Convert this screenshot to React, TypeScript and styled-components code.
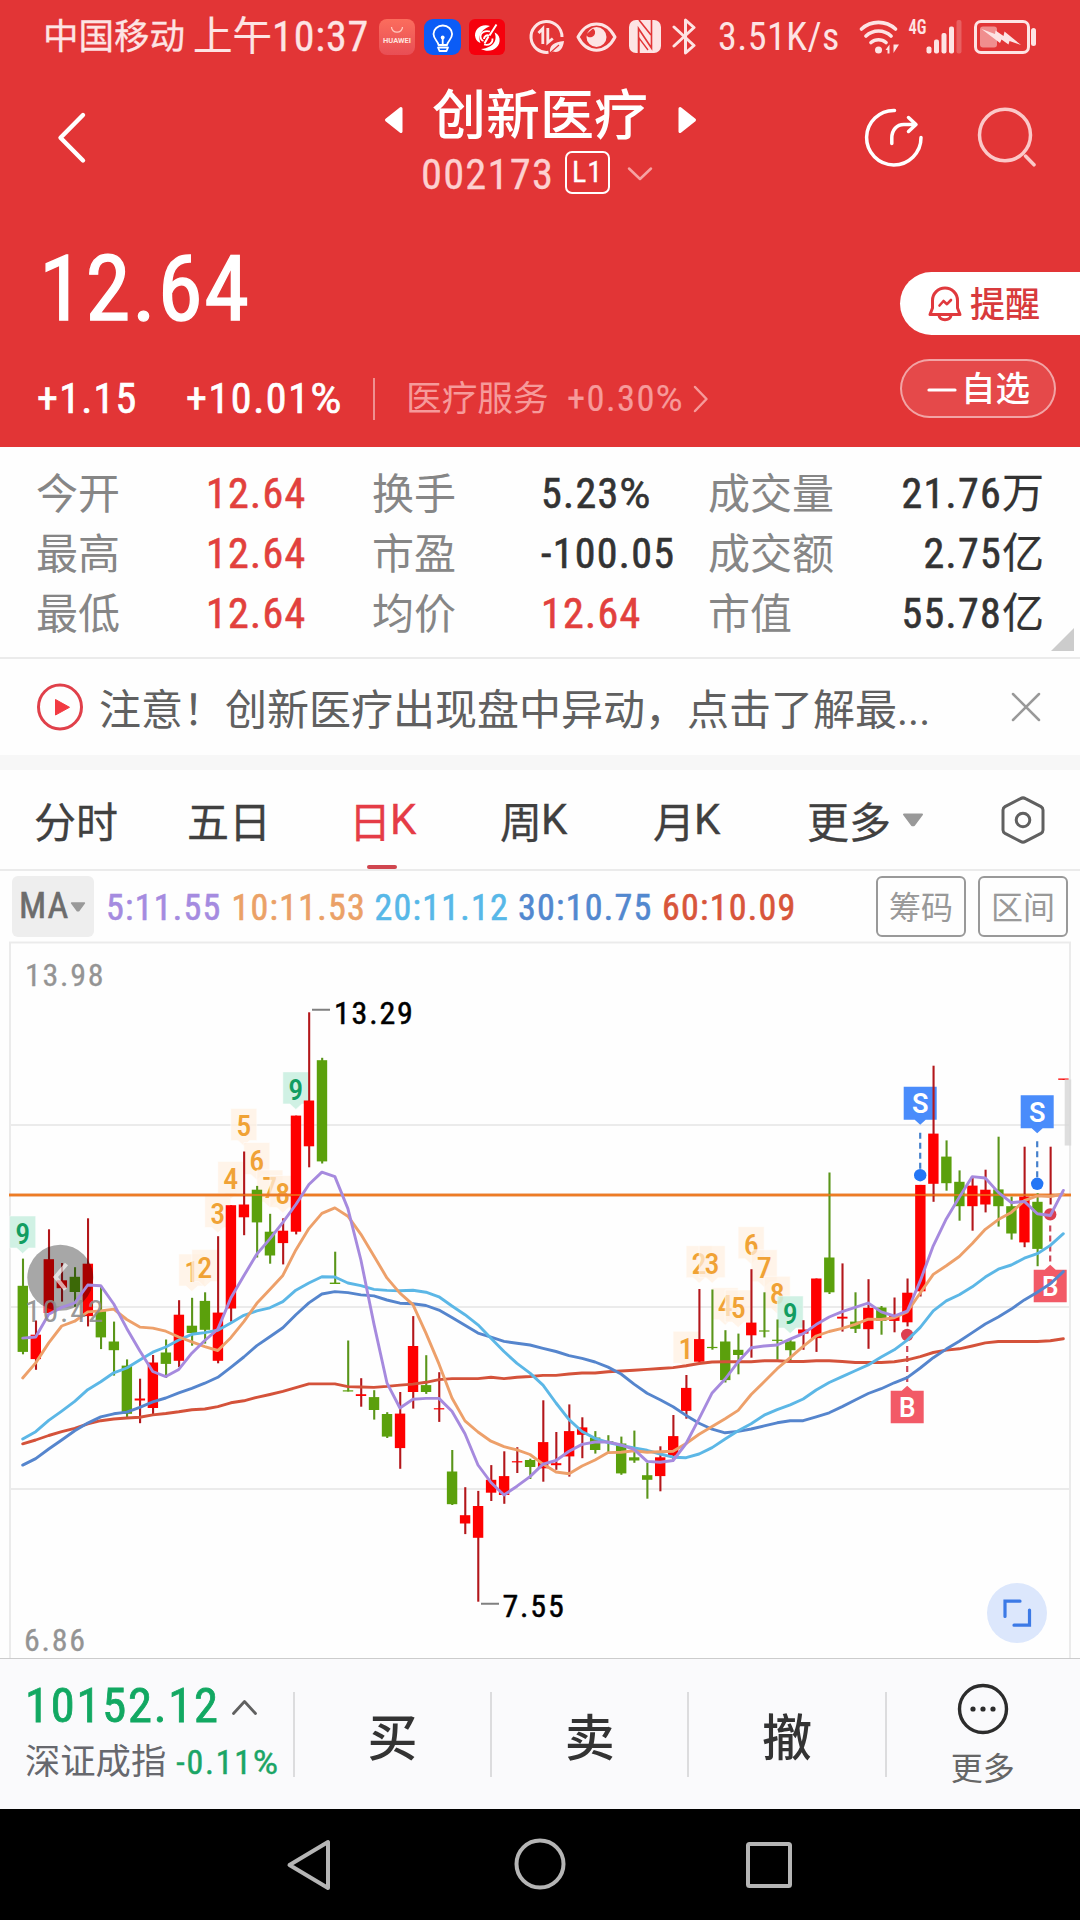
import React from 'react';
import styled, { createGlobalStyle } from 'styled-components';

const RED = '#e23536';
const FONT = "'Roboto Condensed', 'Noto Sans CJK SC', sans-serif";

const GlobalStyle = createGlobalStyle`
  * { box-sizing: border-box; }
  body { margin: 0; background: #fff; font-family: ${FONT}; }
  svg { display: block; flex: none; }
`;

const Screen = styled.main`
  display: flex;
  flex-direction: column;
  width: 1080px;
  height: 1920px;
  overflow: hidden;
  background: #fefefe;
`;

type TextProps = { $size: number; $color?: string; $weight?: number; $track?: number; $line?: number; $stroke?: number };

/** A run of text. Size, weight, tracking and colour vary from use to use. */
const Text = styled.span<TextProps>`
  font-size: ${p => p.$size}px;
  font-weight: ${p => p.$weight ?? 400};
  letter-spacing: ${p => p.$track ?? 0}px;
  line-height: ${p => p.$line ?? p.$size * 1.2}px;
  color: ${p => p.$color ?? 'inherit'};
  -webkit-text-stroke: ${p => p.$stroke ?? 0}px currentColor;
  white-space: nowrap;
`;

const Percent = styled.span`
  font-family: Roboto, sans-serif;
  letter-spacing: 0;
`;

const Unit = styled.span`
  letter-spacing: 0;
  -webkit-text-stroke-width: 0.2px;
`;

/** Digits with a full-width percent sign or a lighter Chinese unit after them. */
const Figure = ({ value }: { value: string }) => {
  const last = value.slice(-1);
  if (last === '%') return <>{value.slice(0, -1)}<Percent>%</Percent></>;
  if (last === '万' || last === '亿') return <>{value.slice(0, -1)}<Unit>{last}</Unit></>;
  return <>{value}</>;
};

/* ---------- header ---------- */

const Header = styled.header`
  display: flex;
  flex-direction: column;
  height: 447px;
  background: ${RED};
  color: #fff;
`;

const StatusBar = styled.div`
  display: flex;
  align-items: center;
  height: 73px;
  padding-left: 43px;
  color: #fde4e4;
`;

const Slot = styled.div<{ $w: number; $gap?: number }>`
  display: flex;
  width: ${p => p.$w}px;
  margin-left: ${p => p.$gap ?? 0}px;
`;

const TitleBar = styled.div`
  display: grid;
  grid-template-columns: 360px 1fr 360px;
  height: 133px;
`;

const BackArea = styled.div`
  padding: 38px 0 0 54px;
`;

const TitleStack = styled.div`
  display: flex;
  flex-direction: column;
  align-items: center;
`;

const NameLine = styled.div`
  display: flex;
  align-items: center;
  justify-content: space-between;
  width: 313px;
  height: 68px;
  margin: 10px 0 0;
`;

const CodeLine = styled.div`
  display: flex;
  align-items: center;
  height: 46px;
  width: 238px;
`;

const LevelBadge = styled.span`
  display: flex;
  align-items: center;
  justify-content: center;
  width: 45px;
  height: 43px;
  margin: -4px 17px 0 11px;
  border: 2px solid #fff;
  border-radius: 7px;
`;

const HeaderActions = styled.div`
  display: flex;
  gap: 50px;
  padding: 34px 0 0 142px;
`;

const QuoteArea = styled.div`
  display: flex;
  justify-content: space-between;
  flex: 1;
`;

const QuoteColumn = styled.div`
  display: flex;
  flex-direction: column;
  padding: 33px 0 0 37px;
`;

const Price = styled.span`
  padding-left: 2px;
  font-size: 91px;
  letter-spacing: 1.6px;
  line-height: 100px;
  -webkit-text-stroke: 1.3px currentColor;
`;

const ChangeLine = styled.div`
  display: flex;
  align-items: center;
  height: 60px;
  margin-top: 30px;
`;

const Divider = styled.i<{ $h: number; $color: string }>`
  width: 2px;
  height: ${p => p.$h}px;
  background: ${p => p.$color};
`;

const QuoteButtons = styled.div`
  display: flex;
  flex-direction: column;
  gap: 24px;
  width: 180px;
  padding-top: 66px;
`;

const AlertButton = styled.button`
  display: flex;
  align-items: center;
  gap: 8px;
  height: 63px;
  padding: 0 0 0 28px;
  border: 0;
  border-radius: 32px 0 0 32px;
  background: #fff;
  font-family: inherit;

  span { padding-top: 4px; }
`;

const WatchButton = styled.button`
  display: flex;
  align-items: center;
  gap: 4px;
  width: 156px;
  height: 59px;
  padding: 2px 0 0 25px;
  border: 2px solid rgba(255, 255, 255, 0.5);
  border-radius: 30px;
  background: rgba(255, 255, 255, 0.1);
  color: #fff;
  font-family: inherit;
`;

/* ---------- statistics ---------- */

const Stats = styled.section`
  position: relative;
  display: grid;
  grid-template-columns: 170px 166px 169px 167px 123px 213px;
  grid-auto-rows: 60px;
  height: 212px;
  padding: 17px 0 0 36px;
  border-bottom: 2px solid #ebebeb;
`;

const StatLabel = styled.span`
  font-size: 42px;
  line-height: 62px;
  color: #868686;
  white-space: nowrap;
`;

const StatValue = styled.span<{ $red: boolean; $end: boolean }>`
  font-size: 42px;
  line-height: 60px;
  letter-spacing: 1.3px;
  color: ${p => (p.$red ? '#e2403d' : '#333')};
  text-align: ${p => (p.$end ? 'right' : 'left')};
  -webkit-text-stroke: 0.6px currentColor;
  white-space: nowrap;
`;

const Corner = styled.i`
  position: absolute;
  right: 6px;
  bottom: 6px;
  border-left: 23px solid transparent;
  border-bottom: 23px solid #ccc;
`;

/* ---------- notice ---------- */

const Notice = styled.section`
  display: flex;
  align-items: center;
  height: 111px;
  padding: 0 39px 0 37px;
  border-bottom: 15px solid #f7f7f7;
`;

const NoticeText = styled.p`
  flex: 1;
  margin: 7px 0 0 16px;
  font-size: 42px;
  line-height: 60px;
  color: #606060;
  white-space: nowrap;
`;

/* ---------- tabs ---------- */

const Tabs = styled.nav`
  display: flex;
  height: 101px;
  padding-left: 34px;
  border-bottom: 2px solid #ebebeb;
`;

const Tab = styled.div<{ $w: number; $active?: boolean }>`
  position: relative;
  display: flex;
  align-items: center;
  gap: 11px;
  width: ${p => p.$w}px;
  font-size: 42px;
  color: ${p => (p.$active ? '#e53c46' : '#404040')};
  -webkit-text-stroke: 0.3px currentColor;

  &::after {
    content: ${p => (p.$active ? "''" : 'none')};
    position: absolute;
    left: 18px;
    bottom: 0;
    width: 30px;
    height: 4px;
    border-radius: 2px;
    background: #d0464f;
  }
`;

const Latin = styled.span`
  margin-left: -12px;
  font-family: Roboto, sans-serif;
`;

/* ---------- moving averages ---------- */

const Averages = styled.div`
  display: flex;
  align-items: center;
  height: 70px;
  padding: 0 12px;
`;

const IndicatorButton = styled.button`
  display: flex;
  align-items: center;
  gap: 1px;
  width: 82px;
  height: 61px;
  margin-right: 12px;
  padding: 2px 0 0 7px;
  border: 0;
  border-radius: 6px;
  background: #eee;
  font-family: inherit;
`;

const AverageValue = styled.span<{ $w: number; $color: string }>`
  width: ${p => p.$w}px;
  padding-top: 4px;
  font-size: 36px;
  letter-spacing: 1.25px;
  line-height: 46px;
  color: ${p => p.$color};
  -webkit-text-stroke: 0.6px currentColor;
  white-space: nowrap;
`;

const OutlineButton = styled.button`
  width: 90px;
  height: 61px;
  margin-left: 12px;
  padding: 4px 0 0;
  border: 2px solid #999;
  border-radius: 6px;
  background: none;
  color: #999;
  font: 400 32px/50px ${FONT};
  white-space: nowrap;
`;

const ChartArea = styled.section`
  height: 717px;
  background: #fefefe;
`;

/* ---------- bottom ---------- */

const TradeBar = styled.footer`
  display: flex;
  align-items: center;
  height: 151px;
  border-top: 1px solid #ccc;
  background: #fafafc;
`;

const IndexBox = styled.div`
  display: flex;
  flex-direction: column;
  width: 293px;
  padding: 0 0 1px 25px;
`;

const IndexLine = styled.div<{ $gap: number; $h: number }>`
  display: flex;
  align-items: center;
  gap: ${p => p.$gap}px;
  height: ${p => p.$h}px;
`;

const TradeButton = styled.div`
  display: flex;
  align-items: center;
  justify-content: center;
  width: 195.2px;
  height: 110px;
  font-size: 50px;
  font-weight: 500;
  color: #333;
`;

const MoreButton = styled.div`
  display: flex;
  flex: 1;
  flex-direction: column;
  align-items: center;
  gap: 15px;
  padding: 4px 1px 0 0;
`;

const SystemNav = styled.div`
  display: flex;
  align-items: center;
  justify-content: space-between;
  height: 111px;
  padding: 0 285px;
  background: #000;
`;

/* ---------- icons ---------- */

const StoreIcon = () => (
  <svg width="36" height="36" viewBox="0 0 36 36">
    <defs>
      <linearGradient id="store" x1="0" y1="0" x2="0" y2="1">
        <stop offset="0" stopColor="#fb6d5d" />
        <stop offset="1" stopColor="#e84e55" />
      </linearGradient>
    </defs>
    <rect width="36" height="36" rx="8" fill="url(#store)" />
    <path d="M12.5 8a5.5 5.2 0 0 0 11 0" fill="none" stroke="#ffc9bf" strokeWidth="1.3" />
    <text x="18" y="24" fontSize="6.6" fontFamily="Roboto" fontWeight="700" textAnchor="middle" textLength="28" lengthAdjust="spacingAndGlyphs" fill="#ffe3df">HUAWEI</text>
  </svg>
);

const BulbIcon = () => (
  <svg width="37" height="36" viewBox="0 0 37 36" fill="none" stroke="#fff" strokeWidth="1.8" strokeLinejoin="round">
    <rect width="37" height="36" rx="9" fill="#0b5cf6" stroke="none" />
    <path d="M14.500 26c0-3.500-5-5.600-5-11a9.300 8.500 0 0 1 18.600 0c0 5.400-5 7.500-5 11zM14 28.500h10l-1.500 3.500h-7zM18.700 19v6" />
    <circle cx="18.700" cy="18.500" r="1.900" fill="#fff" stroke="none" />
  </svg>
);

const SwirlIcon = () => (
  <svg width="36" height="36" viewBox="0 0 36 36" fill="none" stroke="#fff">
    <rect width="36" height="36" rx="6" fill="#f6000d" stroke="none" />
    <path d="M21 7C12 4 4 11 6.500 19c.7 2.500 3 4.500 5 5-2-5-2-12 9.500-17z" fill="#fff" stroke="none" />
    <path d="M12 30c9 5 20-1 18.500-10.500-.5-3.500-3-5.500-5-6 3 7 0 15-13.500 16.500z" fill="#fff" stroke="none" />
    <path d="M21 12.500c-5-1.500-9.500 1-9.500 5 0 3 1.500 4 3 4.500M15 25.500c5 1.500 9-1.500 8.500-6" strokeWidth="1.700" />
    <path d="M27.500 5.500 20.500 16.500M19.500 17.500l-4 7M15 20c0-3 3-4.500 5-3" strokeWidth="2" />
  </svg>
);

const DataSaverIcon = () => (
  <svg width="37" height="37" viewBox="0 0 37 37" fill="none" stroke="#fde4e4" strokeWidth="3">
    <path d="M20.500 34.300A15.500 15.500 0 1 1 34 19" />
    <path d="M10.500 15 14.800 10.500V26M19.800 10v14.500l5-4" strokeWidth="2.800" />
    <path d="M22 35c-1-8 4-11 14-12-1 8-5 12.500-11 10.500z" fill="#fde4e4" stroke="none" />
    <path d="M22 35l9-8" stroke={RED} strokeWidth="1.200" />
  </svg>
);

const EyeIcon = () => (
  <svg width="41" height="30" viewBox="0 0 41 30">
    <path d="M2 15C11-2.500 30-2.500 39 15 30 32.500 11 32.500 2 15z" fill="none" stroke="#fde4e4" strokeWidth="3" strokeLinejoin="round" />
    <circle cx="20.500" cy="15" r="10" fill="#fde4e4" />
    <path d="M17 6.500a4.800 4.800 0 1 1-5.500 8l-1.500-2z" fill={RED} />
  </svg>
);

const NfcIcon = () => (
  <svg width="32" height="33" viewBox="0 0 32 33">
    <rect width="32" height="33" rx="7" fill="#fde4e4" />
    <path d="M9.500 33V8.500L22.500 28V0" fill="none" stroke={RED} strokeWidth="1.600" />
    <path d="M10 0 22 15" fill="none" stroke={RED} strokeWidth="1.600" />
    <path d="M10 33V18l9 12" fill="none" stroke={RED} strokeWidth="1.300" />
  </svg>
);

const BluetoothIcon = () => (
  <svg width="24" height="37" viewBox="0 0 24 37" fill="none" stroke="#fde4e4" strokeWidth="3" strokeLinejoin="round" strokeLinecap="round">
    <path d="M2 9l20 18.500-8.500 7.500V2L22 9.500 2 28" />
  </svg>
);

const WifiIcon = () => (
  <svg width="40" height="36" viewBox="0 0 40 36" fill="none" stroke="#fde4e4" strokeWidth="3.600" strokeLinecap="round">
    <path d="M2.500 10a25 25 0 0 1 34 0M7 17a18 18 0 0 1 25 0M12 23.500a11.500 11.500 0 0 1 15 0" />
    <circle cx="19.500" cy="31" r="3.500" fill="#fde4e4" stroke="none" />
    <path d="M26.500 31l4-5.500v9h-2V31zM34.500 25.500V34l5.500-8.500h-4z" fill="#fde4e4" stroke="none" />
  </svg>
);

const SignalIcon = () => (
  <svg width="58" height="41" viewBox="0 -4 58 41">
    <text x="0.500" y="14" fontFamily="Roboto Condensed" fontSize="20" fontWeight="600" textLength="18" lengthAdjust="spacingAndGlyphs" fill="#fde4e4">4G</text>
    <g fill="#fde4e4">
      <rect x="18.500" y="26.500" width="5" height="7" rx="2" />
      <rect x="26" y="19.500" width="5" height="14" rx="2" />
      <rect x="33.500" y="13" width="5" height="20.500" rx="2" />
      <rect x="41" y="6.500" width="5" height="27" rx="2" />
      <rect x="48.500" y="0" width="5" height="33.500" rx="2" opacity="0.250" />
    </g>
  </svg>
);

const BatteryIcon = () => (
  <svg width="64" height="34" viewBox="0 0 64 34">
    <rect x="1.500" y="1.500" width="53" height="31" rx="5.500" fill="none" stroke="#fde4e4" strokeWidth="3" />
    <rect x="6" y="6.500" width="17" height="21" rx="3" fill="#f08e8e" />
    <rect x="57" y="8" width="5" height="18" rx="2.500" fill="#fde4e4" />
    <path d="M7.500 9 21 14l.5-3.500 8 5.500 1-4.500L47 25l-11.500-4-1 3.500-7-5-1.500 3.500z" fill="#fde4e4" />
  </svg>
);

const BackIcon = () => (
  <svg width="34" height="54" viewBox="0 0 34 54" fill="none" stroke="#fff" strokeWidth="4.400" strokeLinecap="round" strokeLinejoin="round">
    <path d="M29 4 6.500 26.800 29 49.500" />
  </svg>
);

const Arrow = ({ flip }: { flip?: boolean }) => (
  <svg width="19" height="34" viewBox="0 -3 19 34">
    <path d={flip ? 'M2 5.500 16.500 17 2 28.500z' : 'M17 5.500 2.500 17 17 28.500z'} fill="#fff" stroke="#fff" strokeWidth="3" strokeLinejoin="round" />
  </svg>
);

type ChevronProps = { w: number; h: number; d: string; color: string; stroke?: number };
const Chevron = ({ w, h, d, color, stroke = 2.5 }: ChevronProps) => (
  <svg width={w} height={h} viewBox={`0 0 ${w} ${h}`} fill="none" stroke={color} strokeWidth={stroke} strokeLinecap="round" strokeLinejoin="round">
    <path d={d} />
  </svg>
);

const ShareIcon = () => (
  <svg width="62" height="62" viewBox="0 0 62 62" fill="none" stroke="#fff" strokeWidth="3.500" strokeLinecap="round" strokeLinejoin="round">
    <path d="M32.500 3.500A27.200 27.200 0 1 0 59 30.500" />
    <path d="M29.800 36.500V31c0-8 5-13.500 12-13.500h11.500M46.500 10.500l7.500 7-7.500 7" />
  </svg>
);

const SearchIcon = () => (
  <svg width="62" height="62" viewBox="0 0 62 62" fill="none" stroke="#fbc8c8" strokeWidth="3.500" strokeLinecap="round">
    <ellipse cx="31" cy="28" rx="25.500" ry="25.700" />
    <path d="M51.500 49l8.500 8.800" />
  </svg>
);

const BellIcon = () => (
  <svg width="34" height="36" viewBox="0 0 34 36" fill="none" stroke="#e0393d" strokeWidth="3" strokeLinejoin="round" strokeLinecap="round">
    <path d="M4.500 22V14.500a12.500 12.500 0 0 1 25 0V22l2.500 6.500H2z" />
    <path d="M11.500 19.500l4-4.500 3.500 3.200 4-4.200" strokeWidth="2.600" />
    <path d="M11 29.500c1 5.500 11 5.500 12 0" />
  </svg>
);

const PlayIcon = () => (
  <svg width="46" height="48" viewBox="0 0 46 48">
    <ellipse cx="23" cy="24" rx="21.500" ry="22" fill="none" stroke="#e0404a" strokeWidth="3" />
    <path d="M18.500 16.500v15.500L32.500 24.300z" fill="#f23a42" stroke="#f23a42" strokeLinejoin="round" />
  </svg>
);

const Caret = ({ w, h }: { w: number; h: number }) => (
  <svg width={w} height={h} viewBox="0 0 22 14">
    <path d="M2 1.500h18L12 12.200h-2z" fill="#999" stroke="#999" strokeWidth="2" strokeLinejoin="round" />
  </svg>
);

const SettingsIcon = () => (
  <svg width="44" height="48" viewBox="0 0 44 48" fill="none" stroke="#606060" strokeWidth="3" strokeLinejoin="round">
    <path d="M24.500 2.600 40 10.600a4 4 0 0 1 2 3.400V34a4 4 0 0 1-2 3.400L24.500 45.400a5 5 0 0 1-5 0L4 37.400A4 4 0 0 1 2 34V14a4 4 0 0 1 2-3.400L19.500 2.600a5 5 0 0 1 5 0z" />
    <circle cx="22" cy="24" r="6.800" />
  </svg>
);

const MoreIcon = () => (
  <svg width="52" height="52" viewBox="0 0 52 52">
    <circle cx="26" cy="26" r="23.500" fill="none" stroke="#2c2c2c" strokeWidth="3.400" />
    {[16, 26, 36].map(x => <circle key={x} cx={x} cy="26" r="2.600" fill="#2c2c2c" />)}
  </svg>
);

/* ---------- chart data ---------- */

const FIRST_X = 22.7;
const STEP = 13.008;
const xAt = (i: number) => FIRST_X + i * STEP;

type Candle = ['r' | 'g', number, number, number, number];

/** Direction, then screen heights of the high, body top, body bottom and low. */
const CANDLES: Candle[] = [
  ['g', 1258.6, 1285.8, 1351.9, 1354.3], ['r', 1320.5, 1334.7, 1359.1, 1369.8], ['r', 1229.3, 1259.2, 1313, 1314],
  ['r', 1263, 1280.3, 1288.2, 1301.6], ['g', 1267.2, 1276.8, 1292, 1306.8], ['r', 1218.3, 1263.7, 1316.1, 1326.4],
  ['g', 1287.1, 1311.2, 1337.4, 1349.1], ['g', 1321.6, 1341.5, 1350.2, 1375.6], ['g', 1359.4, 1365.6, 1413.8, 1417],
  ['r', 1378.7, 1398.5, 1400.5, 1423.2], ['r', 1355, 1362.5, 1408, 1416], ['g', 1339.5, 1352.5, 1363.9, 1378],
  ['r', 1300.2, 1314.7, 1360.8, 1367], ['g', 1297.8, 1325.7, 1333, 1345.7], ['g', 1292.3, 1300.9, 1329.8, 1343.6],
  ['r', 1236.2, 1312.6, 1360.8, 1363.3], ['r', 1205.2, 1205.2, 1308.5, 1321.6], ['r', 1151.5, 1204.5, 1217.3, 1235.2],
  ['g', 1185.9, 1189.7, 1222.4, 1257.5], ['g', 1213.8, 1231.7, 1255.5, 1263.7], ['r', 1218.3, 1230.7, 1243.1, 1264.4],
  ['r', 1115.6, 1115.6, 1231.7, 1234.4], ['r', 1012.3, 1100.5, 1146.3, 1167.3], ['g', 1057.8, 1060.2, 1161.4, 1163.5],
  ['g', 1251.7, 1282.6, 1284, 1284], ['g', 1340.5, 1390.3, 1391.5, 1391.5], ['r', 1378.2, 1394.2, 1396, 1406.7],
  ['g', 1390.2, 1397.1, 1410, 1419.6], ['g', 1412.2, 1414, 1436.6, 1438], ['r', 1392, 1413.6, 1448.1, 1468.8],
  ['r', 1316.1, 1346, 1392, 1408.6], ['g', 1355.2, 1385.1, 1392, 1393.9], ['r', 1372.2, 1408.2, 1409.4, 1421.9],
  ['g', 1450, 1471.5, 1504.2, 1505], ['r', 1487.2, 1515.2, 1523.5, 1534.1], ['r', 1490.9, 1506, 1537.8, 1601.7],
  ['r', 1465.1, 1479.8, 1492.7, 1501], ['r', 1451.3, 1476.1, 1495, 1503.8], ['r', 1447.2, 1461.2, 1462.4, 1473],
  ['g', 1458.7, 1460, 1467, 1479], ['r', 1400.3, 1442.1, 1468.3, 1481.7], ['r', 1432, 1463.2, 1465.2, 1469.8],
  ['r', 1404.4, 1431.1, 1456.4, 1476.6], ['r', 1417.3, 1427.4, 1434.8, 1458.2], ['g', 1431.1, 1437.5, 1450, 1453.6],
  ['g', 1435.2, 1441.2, 1442.4, 1452.2], ['g', 1436.6, 1443.5, 1473.4, 1474.8], ['g', 1430.6, 1457.3, 1460.5, 1462.8],
  ['g', 1462.8, 1475.2, 1479.8, 1498.7], ['r', 1446.3, 1457.3, 1476.1, 1491.3], ['r', 1415, 1436.1, 1455.5, 1459.6],
  ['r', 1375, 1387.9, 1410.9, 1418.7], ['r', 1289, 1339.1, 1361.7, 1362], ['g', 1289.5, 1346.9, 1348.1, 1349.7],
  ['g', 1330.2, 1341.5, 1380.1, 1382.5], ['g', 1333.6, 1349.8, 1355, 1374.3], ['r', 1269.2, 1322.6, 1335.3, 1357.7],
  ['g', 1292.3, 1330.4, 1331.6, 1337.4], ['g', 1319.5, 1339.7, 1340.9, 1359.8], ['g', 1339.5, 1341.5, 1350.2, 1360.8],
  ['r', 1320.2, 1329.5, 1333.6, 1349.8], ['r', 1278.5, 1278.5, 1338.1, 1351.9], ['g', 1172.5, 1257.5, 1292.3, 1294],
  ['r', 1263.4, 1316.7, 1318.6, 1331.6], ['g', 1292.3, 1321.6, 1328.8, 1333], ['r', 1279.2, 1307.8, 1329.2, 1348.8],
  ['g', 1306, 1307.5, 1320.9, 1334.7], ['r', 1297.5, 1314, 1320.9, 1332.3], ['r', 1278.5, 1292.7, 1322.3, 1326.4],
  ['r', 1184.9, 1184.9, 1291.3, 1296.5], ['r', 1065.7, 1133.6, 1183.8, 1201.8], ['g', 1140.4, 1156.6, 1183.2, 1190.7],
  ['g', 1170.4, 1181.8, 1206.2, 1220.7], ['r', 1176.3, 1185.6, 1206.2, 1230.7], ['r', 1169.7, 1189.7, 1204.5, 1212.4],
  ['g', 1136.7, 1189.4, 1206.2, 1226.6], ['g', 1196.6, 1206.2, 1233.5, 1239.6], ['r', 1146.7, 1196.6, 1242.4, 1247.2],
  ['g', 1193.2, 1201.8, 1248.9, 1266.2], ['r', 1146.7, 1195, 1196, 1204.5], ['r', 1079, 1078.5, 1079.8, 1079.8],
];

const LINES: { color: string; ys: number[] }[] = [
  { color: '#d4523a', ys: [1443.8, 1440, 1435.5, 1431.7, 1428.3, 1423.8, 1420.7, 1419, 1418, 1417.3, 1414.9, 1413.5, 1411.8, 1409.7, 1409, 1406.6, 1402.8, 1400.8, 1397.3, 1394.5, 1391.4, 1387.7, 1383.9, 1383.9, 1383.9, 1386.6, 1387, 1387.4, 1386.4, 1385.1, 1384.1, 1382.3, 1379.6, 1378.6, 1378.6, 1378.6, 1377.2, 1378.6, 1377.2, 1376.5, 1375.4, 1375.4, 1374, 1373, 1373, 1371.7, 1371, 1370.3, 1369.4, 1368.5, 1367.6, 1365.8, 1363.5, 1362, 1361.8, 1361.8, 1361.8, 1360.8, 1360.8, 1361.5, 1361.5, 1360.8, 1360.8, 1361.5, 1362.5, 1362.5, 1362.5, 1361.8, 1359.8, 1356.7, 1352.5, 1350.1, 1348.8, 1346, 1342.9, 1341.5, 1341.5, 1341.5, 1341.5, 1340.8, 1338.8] },
  { color: '#5585cd', ys: [1465.1, 1458.6, 1449, 1440, 1430.7, 1423.1, 1416.9, 1413.8, 1412.1, 1407.3, 1401.8, 1398, 1392.8, 1388.3, 1383.2, 1377.3, 1367.3, 1357, 1345.6, 1336.7, 1327.7, 1314.7, 1302.9, 1294, 1291.6, 1292.6, 1294.9, 1295.9, 1300, 1303.2, 1303.7, 1305.5, 1310.1, 1317.5, 1325.3, 1333.1, 1337.2, 1341.4, 1343.2, 1345, 1348.3, 1351.5, 1355.6, 1358.4, 1362, 1367.1, 1374, 1384.1, 1393.3, 1399.8, 1406.7, 1415.4, 1423.2, 1429.2, 1432.8, 1431.4, 1429, 1425.9, 1422.8, 1420.7, 1420.7, 1416.9, 1412.8, 1406.6, 1400, 1393.5, 1388.7, 1382.8, 1377.7, 1368, 1357.7, 1349.1, 1341.2, 1332.6, 1324, 1317, 1309.1, 1299.9, 1292.3, 1283.7, 1271.6] },
  { color: '#5cb7e6', ys: [1439, 1431.7, 1420.4, 1411.1, 1401.4, 1389.7, 1381.8, 1372.8, 1368, 1360.1, 1352.2, 1347, 1340, 1334.3, 1332.6, 1330.2, 1322.9, 1315.3, 1310.9, 1307.8, 1301.6, 1290.2, 1283, 1276.8, 1277, 1283, 1285.7, 1289.4, 1290.4, 1290.8, 1290.3, 1292.2, 1296.8, 1306, 1314.7, 1324.8, 1338.2, 1351.5, 1363.4, 1373.1, 1385.1, 1403, 1419.6, 1431.5, 1438.4, 1442.5, 1445.3, 1448, 1450.3, 1454, 1457.2, 1457.7, 1454, 1447.6, 1439, 1430.7, 1423.8, 1415.2, 1409.7, 1404.9, 1399, 1390, 1382.5, 1376.6, 1370.8, 1364.9, 1357, 1349.8, 1340.1, 1327.4, 1310.9, 1300.9, 1294.7, 1286.8, 1277.1, 1269.2, 1265, 1258.2, 1253.7, 1245.4, 1233.7] },
  { color: '#eda06a', ys: [1378, 1362.9, 1342.9, 1326, 1321.2, 1311.9, 1310.9, 1309.1, 1319.5, 1327.1, 1328.1, 1331.2, 1337, 1341.9, 1346.7, 1350.5, 1337.7, 1321.6, 1303.3, 1289.5, 1275.4, 1249.9, 1228.6, 1213.4, 1207.9, 1216.2, 1234.3, 1255.9, 1277.9, 1293.1, 1304.6, 1333.1, 1363.9, 1398, 1420.9, 1432, 1441.2, 1446.7, 1449.9, 1454.5, 1464.1, 1472, 1473.8, 1466, 1460, 1452.6, 1452.2, 1450.8, 1452.2, 1451.7, 1451.3, 1443.5, 1434.3, 1426.4, 1418.7, 1410.4, 1394.5, 1381.8, 1368.7, 1357.7, 1346.3, 1336, 1331.5, 1328.4, 1324.3, 1319.1, 1319.5, 1317.7, 1311.9, 1293, 1274.4, 1265.8, 1256.5, 1243.4, 1229.3, 1219.6, 1212.4, 1200.7, 1195.9, 1196.5, 1194] },
  { color: '#a68ade', ys: [1338.1, 1337, 1314.3, 1307.4, 1303, 1285, 1285.7, 1304, 1328.4, 1350.8, 1371.5, 1376.6, 1369.4, 1353.2, 1340.5, 1329.1, 1298.1, 1275.8, 1254.1, 1238.9, 1222.4, 1204.5, 1184.5, 1172.1, 1176.6, 1208.6, 1260, 1323.9, 1382.8, 1408, 1399.3, 1398.4, 1398.4, 1411.3, 1433.8, 1465, 1482.5, 1495, 1486.2, 1476.6, 1464.1, 1460.5, 1451.3, 1444.4, 1442, 1442, 1444.8, 1449.4, 1461.4, 1462.3, 1460.5, 1443.5, 1418.6, 1392.9, 1379, 1361.8, 1347.7, 1346, 1345, 1339.1, 1333.6, 1324.6, 1317, 1311.6, 1307.4, 1303, 1311.9, 1316, 1311.2, 1280.9, 1245.8, 1218.9, 1197.2, 1176.6, 1178, 1192.4, 1202.7, 1201.4, 1213.8, 1215.5, 1190.4] },
];

/** Sequence counters: label, candle index, top of the tag. */
const COUNTS: [string, number, number][] = [
  ['9', 0, 1216], ['1', 13, 1254], ['2', 14, 1249.6], ['3', 15, 1195.5], ['4', 16, 1161.4], ['5', 17, 1108.4],
  ['6', 18, 1142.5], ['7', 19, 1170], ['8', 20, 1175.5], ['9', 21, 1071.9],
  ['1', 51, 1331.3], ['2', 52, 1245.7], ['3', 53, 1245.7], ['4', 54, 1287.7], ['5', 55, 1290], ['6', 56, 1226.7],
  ['7', 57, 1249.7], ['8', 58, 1276.3], ['9', 59, 1296],
];

const CountTag = ({ label, x, top }: { label: string; x: number; top: number }) => {
  const done = label === '9';
  return (
    <g transform={`translate(${x} ${top})`}>
      <path
        d="M-13 0H13V32H6L0 37.500-6 32H-13Z"
        fill={done ? '#c9efe0' : '#fff0e0'}
        fillOpacity={done ? 0.88 : 0.72}
        stroke="#fff"
        strokeOpacity="0.500"
      />
      <text y="28" fontSize="30" fontWeight="500" textAnchor="middle" fill={done ? '#129d61' : '#f0a235'}>{label}</text>
    </g>
  );
};

type MarkerProps = { kind: 'S' | 'B'; x: number; top: number; dot: number };
const Marker = ({ kind, x, top, dot }: MarkerProps) => {
  const sell = kind === 'S';
  return (
    <g transform={`translate(${x} 0)`}>
      <path
        d={sell ? `M0 ${top + 46}V${dot - 5}` : `M0 ${dot + 11}V${top - 8}`}
        stroke={sell ? '#4580cc' : '#cc4657'}
        strokeWidth="2.200"
        strokeDasharray="6 4"
      />
      <circle cy={dot} r="6.200" fill={sell ? '#2476f5' : '#dc3f50'} />
      <path
        transform={`translate(0 ${top})`}
        d={sell ? 'M-16.500 0H16.500V33H5.500L0 38-5.500 33H-16.500Z' : 'M-16.500 0H-5.500L0-5 5.500 0H16.500V32.500H-16.500Z'}
        fill={sell ? '#4a8cfb' : '#f25a67'}
      />
      <text y={top + 26.5} fontFamily="Roboto" fontSize="28.500" fontWeight="600" textAnchor="middle" fill="#fff" textLength="16.500" lengthAdjust="spacingAndGlyphs">{kind}</text>
    </g>
  );
};

const Chart = () => (
  <svg width="1080" height="717" viewBox="0 941 1080 717" fontFamily="Roboto Condensed">
    <g stroke="#ebebeb" strokeWidth="2" fill="none">
      <path d="M10 1660V942.500H1070V1660" />
      <path d="M10 1125H1070M10 1307H1070M10 1489H1070" />
    </g>
    {COUNTS.map(([label, i, top]) => <CountTag key={i} label={label} x={xAt(i)} top={top} />)}
    <Marker kind="S" x={920.200} top={1086.700} dot={1175.200} />
    <Marker kind="S" x={1037.200} top={1095.300} dot={1183.800} />
    <Marker kind="B" x={907.200} top={1390.800} dot={1335} />
    <path d="M9 1195H1071" stroke="#e8833c" strokeWidth="3" />
    {CANDLES.map(([dir, high, top, bottom, low], i) => (
      <g key={i}>
        <path d={`M${xAt(i) + 0.3} ${high}V${low}`} stroke={dir === 'r' ? '#b3171b' : '#5a951a'} strokeWidth="2.100" />
        <rect x={xAt(i) - 5.1} y={top} width="10.400" height={bottom - top} fill={dir === 'r' ? '#fe0000' : '#5ba00c'} />
      </g>
    ))}
    <Marker kind="B" x={1050.200} top={1269.800} dot={1214.400} />
    <path d="M9 1195H1071" stroke="#f07a1c" strokeWidth="2" opacity="0.700" />
    <g fontSize="32" fill="#949494" stroke="#949494" strokeWidth="0.300" letterSpacing="1.700">
      <text x="25" y="985.500">13.98</text>
      <text x="24" y="1651">6.86</text>
    </g>
    <circle cx="60.300" cy="1277.800" r="33" fill="#000" opacity="0.340" />
    <path d="M66.500 1264 55.500 1277l10 12.500" fill="none" stroke="#fff" strokeWidth="4" opacity="0.650" />
    {LINES.map(({ color, ys }) => (
      <polyline key={color} points={ys.map((y, i) => `${xAt(i)},${y}`).join(' ')} fill="none" stroke={color} strokeWidth="2.900" strokeLinejoin="round" strokeLinecap="round" />
    ))}
    <text x="25" y="1321.500" fontSize="32" fill="#8c8c8c" fillOpacity="0.900" letterSpacing="1.700">10.42</text>
    <path d="M312 1009.800H330M481 1603.800H499" stroke="#808080" strokeWidth="2" />
    <g fontSize="32" fill="#000" stroke="#000" strokeWidth="0.500" letterSpacing="1.800">
      <text x="334" y="1023.500">13.29</text>
      <text x="502.500" y="1616.500">7.55</text>
    </g>
    <rect x="1064.700" y="1079.500" width="6.500" height="66" fill="#d8d8d8" opacity="0.850" />
    <circle cx="1017" cy="1613" r="30" fill="#dce7fc" />
    <path d="M1020 1601.200H1005V1616.500M1029.500 1610V1625.200H1014" fill="none" stroke="#3c7ae6" strokeWidth="3.200" strokeLinecap="round" />
  </svg>
);

/* ---------- screen ---------- */

const STATS: [string, string, boolean][][] = [
  [['今开', '12.64', true], ['换手', '5.23%', false], ['成交量', '21.76万', false]],
  [['最高', '12.64', true], ['市盈', '-100.05', false], ['成交额', '2.75亿', false]],
  [['最低', '12.64', true], ['均价', '12.64', true], ['市值', '55.78亿', false]],
];

const AVERAGES: [string, string, number][] = [
  ['5:11.55', '#a58be0', 125.5],
  ['10:11.53', '#eba167', 143],
  ['20:11.12', '#57b8e8', 143.5],
  ['30:10.75', '#5288cf', 144],
  ['60:10.09', '#d8553a', 140],
];

export default function App() {
  return (
    <Screen>
      <GlobalStyle />
      <Header>
        <StatusBar>
          <Slot $w={150}><Text $size={35.5} $line={50} $stroke={0.3}>中国移动</Text></Slot>
          <Slot $w={186}><Text $size={39.5} $line={50} $stroke={0.2}>上午</Text><Text $size={42} $track={0.9} $line={50} $stroke={0.3}>10:37</Text></Slot>
          <Slot $w={36}><StoreIcon /></Slot>
          <Slot $w={37} $gap={9}><BulbIcon /></Slot>
          <Slot $w={36} $gap={8}><SwirlIcon /></Slot>
          <Slot $w={37} $gap={23}><DataSaverIcon /></Slot>
          <Slot $w={41} $gap={11}><EyeIcon /></Slot>
          <Slot $w={32} $gap={12}><NfcIcon /></Slot>
          <Slot $w={24} $gap={11}><BluetoothIcon /></Slot>
          <Slot $w={124} $gap={22}><Text $size={38} $track={0.5} $line={50}>3.51K/s</Text></Slot>
          <Slot $w={40} $gap={17}><WifiIcon /></Slot>
          <Slot $w={58} $gap={9}><SignalIcon /></Slot>
          <Slot $w={64} $gap={8}><BatteryIcon /></Slot>
        </StatusBar>

        <TitleBar>
          <BackArea><BackIcon /></BackArea>
          <TitleStack>
            <NameLine>
              <Arrow />
              <Text $size={54} $weight={500} $line={68}>创新医疗</Text>
              <Arrow flip />
            </NameLine>
            <CodeLine>
              <Text $size={42.5} $track={1.2} $stroke={0.3} $color="#fdd0d0">002173</Text>
              <LevelBadge><Text $size={30} $track={1} $stroke={0.3}>L1</Text></LevelBadge>
              <Chevron w={26} h={16} d="M2 2.500 13 13 24 2.500" color="#f6a3a3" />
            </CodeLine>
          </TitleStack>
          <HeaderActions><ShareIcon /><SearchIcon /></HeaderActions>
        </TitleBar>

        <QuoteArea>
          <QuoteColumn>
            <Price>12.64</Price>
            <ChangeLine>
              <Slot $w={149}><Text $size={42} $stroke={0.7} $track={1.3}>+1.15</Text></Slot>
              <Slot $w={187}><Text $size={42} $stroke={0.7} $track={1.6}><Figure value="+10.01%" /></Text></Slot>
              <Divider $h={42} $color="rgba(255,255,255,.45)" />
              <Slot $w={159} $gap={31}><Text $size={35.7} $color="#f69a9a">医疗服务</Text></Slot>
              <Slot $w={126} $gap={2}><Text $size={36.5} $track={1.4} $stroke={0.2} $color="#f69a9a"><Figure value="+0.30%" /></Text></Slot>
              <Chevron w={16} h={28} d="M2 2 13.500 14 2 26" color="#f69a9a" />
            </ChangeLine>
          </QuoteColumn>
          <QuoteButtons>
            <AlertButton><BellIcon /><Text $size={35} $weight={500} $color="#d83a3c">提醒</Text></AlertButton>
            <WatchButton>
              <Chevron w={30} h={6} d="M2 3H28" color="#fff" stroke={3.2} />
              <Text $size={34.5} $weight={500}>自选</Text>
            </WatchButton>
          </QuoteButtons>
        </QuoteArea>
      </Header>

      <Stats>
        {STATS.flat().map(([label, value, red], i) => (
          <React.Fragment key={label}>
            <StatLabel>{label}</StatLabel>
            <StatValue $red={red} $end={i % 3 === 2}><Figure value={value} /></StatValue>
          </React.Fragment>
        ))}
        <Corner />
      </Stats>

      <Notice>
        <PlayIcon />
        <NoticeText>注意！创新医疗出现盘中异动，点击了解最...</NoticeText>
        <Chevron w={30} h={30} d="M2 2 28 28M28 2 2 28" color="#999" />
      </Notice>

      <Tabs>
        <Tab $w={153}>分时</Tab>
        <Tab $w={162}>五日</Tab>
        <Tab $w={151} $active>日<Latin>K</Latin></Tab>
        <Tab $w={153}>周<Latin>K</Latin></Tab>
        <Tab $w={154}>月<Latin>K</Latin></Tab>
        <Tab $w={194}>更多<Caret w={22} h={14} /></Tab>
        <Tab $w={44}><SettingsIcon /></Tab>
      </Tabs>

      <Averages>
        <IndicatorButton><Text $size={36} $track={1} $stroke={0.6} $color="#6c6c6c">MA</Text><Caret w={16} h={10} /></IndicatorButton>
        {AVERAGES.map(([value, color, w]) => <AverageValue key={value} $w={w} $color={color}>{value}</AverageValue>)}
        <Slot $w={204} $gap={62}>
          <OutlineButton>筹码</OutlineButton>
          <OutlineButton>区间</OutlineButton>
        </Slot>
      </Averages>

      <ChartArea><Chart /></ChartArea>

      <TradeBar>
        <IndexBox>
          <IndexLine $gap={11} $h={58}>
            <Text $size={48.5} $stroke={0.8} $track={1.8} $color="#12a862">10152.12</Text>
            <Chevron w={27} h={18} d="M2.500 15.500 13.500 3.500 24.500 15.500" color="#606060" stroke={2.8} />
          </IndexLine>
          <IndexLine $gap={10} $h={54}>
            <Text $size={35.3} $color="#67686e">深证成指</Text>
            <Text $size={34} $track={1.8} $stroke={0.5} $color="#1ba566"><Figure value="-0.11%" /></Text>
          </IndexLine>
        </IndexBox>
        <Divider $h={85} $color="#dcdcde" />
        <TradeButton>买</TradeButton>
        <Divider $h={85} $color="#dcdcde" />
        <TradeButton>卖</TradeButton>
        <Divider $h={85} $color="#dcdcde" />
        <TradeButton>撤</TradeButton>
        <Divider $h={85} $color="#dcdcde" />
        <MoreButton>
          <MoreIcon />
          <Text $size={32} $color="#666">更多</Text>
        </MoreButton>
      </TradeBar>

      <SystemNav>
        <svg width="52" height="54" viewBox="0 0 52 54" fill="none" stroke="#b5b5b5" strokeWidth="4" strokeLinejoin="round"><path d="M43 4V50L4.500 27z" /></svg>
        <svg width="52" height="54" viewBox="0 0 52 54" fill="none" stroke="#b5b5b5" strokeWidth="4"><circle cx="26" cy="26" r="23.500" /></svg>
        <svg width="52" height="52" viewBox="0 0 52 52" fill="none" stroke="#b5b5b5" strokeWidth="4"><rect x="5" y="5" width="42" height="42" rx="1.500" /></svg>
      </SystemNav>
    </Screen>
  );
}
